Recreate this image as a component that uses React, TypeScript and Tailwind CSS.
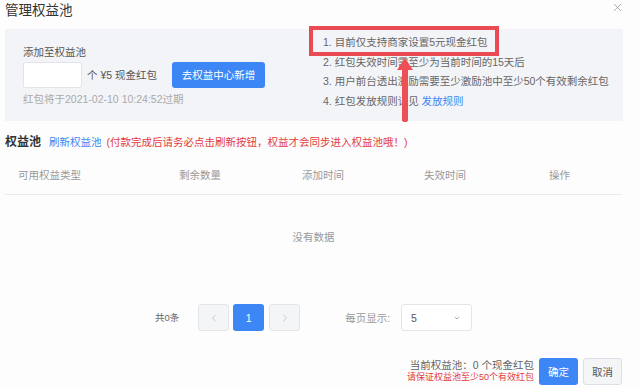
import { ChevronDown, ChevronLeft, ChevronRight, X } from "lucide-react";

const columns = ["可用权益类型", "剩余数量", "添加时间", "失效时间", "操作"];

const tips = [
  "1. 目前仅支持商家设置5元现金红包",
  "2. 红包失效时间需至少为当前时间的15天后",
  "3. 用户前台透出激励需要至少激励池中至少50个有效剩余红包",
];

export default function App() {
  return (
    <div className="relative h-[388px] w-[640px] overflow-hidden bg-[#fdfdfd] font-['Liberation_Sans','Noto_Sans_CJK_SC',sans-serif] text-[10.5px] leading-[14px] text-[#666]">
      {/* header */}
      <div className="flex h-[29px] items-start justify-between pl-[5px] pr-[16px]">
        <h1 className="mt-[3px] text-[13.5px] leading-[16px] text-[#333]">管理权益池</h1>
        <X className="mt-[1px] h-[13px] w-[13px] text-[#999]" strokeWidth={1.4} />
      </div>

      {/* add panel */}
      <div className="ml-[5px] flex h-[92px] w-[618px] bg-[#f3f4f7]">
        <div className="w-[318px] pl-[18px] pt-[16px]">
          <div className="text-[#555]">添加至权益池</div>
          <div className="mt-[3px] flex h-[26px] items-center">
            <div className="h-[26px] w-[59px] rounded-[2px] border border-[#e2e4e8] bg-white" />
            <span className="ml-[5px] text-[#555]">个 ¥5 现金红包</span>
            <button className="ml-[15px] h-[26px] w-[93px] rounded-[3px] bg-[#3d86f5] text-[10.5px] text-white">
              去权益中心新增
            </button>
          </div>
          <div className="mt-[4px] text-[#aaa]">红包将于2021-02-10 10:24:52过期</div>
        </div>
        <div className="pt-[4px] leading-[19.5px] text-[#666]">
          {tips.map((t) => (
            <div key={t}>{t}</div>
          ))}
          <div>
            4. 红包发放规则详见 <span className="text-[#3d86f5]">发放规则</span>
          </div>
        </div>
      </div>

      {/* pool title */}
      <div className="ml-[5px] mt-[14px] flex items-center">
        <span className="text-[12px] font-bold text-[#333]">权益池</span>
        <span className="ml-[8px] text-[#3d86f5]">刷新权益池</span>
        <span className="ml-[5px] text-[#e4393c]">(付款完成后请务必点击刷新按钮，权益才会同步进入权益池哦！)</span>
      </div>

      {/* table */}
      <div className="ml-[5px] w-[617px]">
        <div className="mt-[7px] grid h-[39px] grid-cols-[161px_123px_122px_125px_1fr] items-center border-b border-[#ebebeb] pl-[13px] text-[#999]">
          {columns.map((c) => (
            <span key={c}>{c}</span>
          ))}
        </div>
        <div className="flex h-[84px] items-center justify-center text-[#999]">没有数据</div>

        {/* pagination */}
        <div className="mt-[25px] flex h-[27px] items-center justify-center">
          <span className="text-[9.5px] text-[#666]">共0条</span>
          <div className="ml-[19px] flex h-[27px] w-[31px] items-center justify-center rounded-[3px] border border-[#e3e5e9] bg-[#f4f5f7]">
            <ChevronLeft className="h-[12px] w-[12px] text-[#b5b8bf]" strokeWidth={1.5} />
          </div>
          <div className="ml-[4px] flex h-[27px] w-[31px] items-center justify-center rounded-[3px] bg-[#3d86f5] text-white">
            1
          </div>
          <div className="ml-[5px] flex h-[27px] w-[31px] items-center justify-center rounded-[3px] border border-[#e3e5e9] bg-[#f4f5f7]">
            <ChevronRight className="h-[12px] w-[12px] text-[#b5b8bf]" strokeWidth={1.5} />
          </div>
          <span className="ml-[45px] text-[#999]">每页显示:</span>
          <div className="ml-[11px] flex h-[27px] w-[71px] items-center justify-between rounded-[3px] border border-[#e3e5e9] bg-white pl-[9px] pr-[10px] text-[#555]">
            <span>5</span>
            <ChevronDown className="h-[8px] w-[8px] text-[#888]" strokeWidth={2} />
          </div>
        </div>

        {/* footer */}
        <div className="mt-[27px] flex h-[27px] items-start justify-end">
          <div className="mt-[1px] flex flex-col items-end">
            <span className="leading-[13px] text-[#666]">当前权益池：0 个现金红包</span>
            <span className="text-[9px] leading-[11px] text-[#e4393c]">请保证权益池至少50个有效红包</span>
          </div>
          <button className="ml-[5px] h-[27px] w-[39px] rounded-[3px] bg-[#3d86f5] text-[10.5px] text-white">确定</button>
          <button className="ml-[5px] h-[27px] w-[39px] rounded-[3px] border border-[#dcdfe6] bg-[#f4f5f7] text-[10.5px] text-[#555]">
            取消
          </button>
        </div>
      </div>

      {/* annotation overlay */}
      <div className="pointer-events-none absolute left-[309px] top-[26px] h-[30px] w-[190px] border-[4px] border-[#ea4a52]" />
      <svg className="pointer-events-none absolute left-[396px] top-[57px]" width="18" height="66" viewBox="0 0 18 66">
        <path d="M9 1 L17 13 L12 13 L12 63 Q12 65 9 65 Q6 65 6 63 L6 13 L1 13 Z" fill="#ee4f56" strokeLinejoin="round" />
      </svg>
    </div>
  );
}
